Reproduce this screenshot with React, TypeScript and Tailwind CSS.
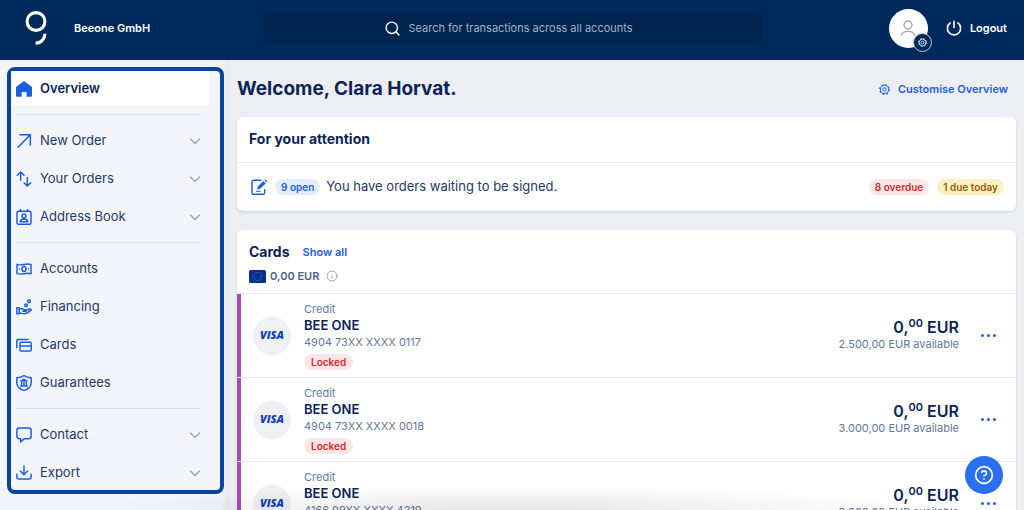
import * as React from "react";
import { CircleHelp, Info, Search } from "lucide-react";

type IconProps = { className?: string };

const strokeProps = {
  viewBox: "0 0 24 24",
  fill: "none",
  stroke: "currentColor",
  strokeWidth: 2.2,
  strokeLinecap: "round" as const,
  strokeLinejoin: "round" as const,
  "aria-hidden": true,
};

const LogoMark = ({ className }: IconProps) => (
  <svg viewBox="0 0 22 34" fill="none" stroke="currentColor" strokeWidth="3.1" className={className} role="img" aria-label="George">
    <circle cx="11" cy="10.5" r="8.9" />
    <path d="M19.9 22.8c0 5-3.9 9.3-9.3 9.3" />
  </svg>
);

const HomeIcon = ({ className }: IconProps) => (
  <svg viewBox="0 0 24 24" fill="currentColor" className={className} aria-hidden>
    <path d="M11 .8a1.8 1.8 0 0 1 2 0l10 7.4c.6.5 1 1.1 1 1.8v12a1.5 1.5 0 0 1-1.5 1.5H16v-6a1 1 0 0 0-1-1H9.5a1 1 0 0 0-1 1v6h-7A1.5 1.5 0 0 1 0 22V10c0-.7.4-1.3 1-1.8z" />
  </svg>
);

const ArrowIcon = ({ className }: IconProps) => (
  <svg {...strokeProps} className={className}>
    <path d="M3 21.5 21.5 2.5M6 2.5h15.5V18" />
  </svg>
);

const ChevronIcon = ({ className }: IconProps) => (
  <svg viewBox="0 0 12 12" fill="none" stroke="currentColor" strokeWidth="1.2" strokeLinecap="round" strokeLinejoin="round" className={className} aria-hidden>
    <path d="m1.5 4 4.5 4.5L10.5 4" />
  </svg>
);

const OrdersIcon = ({ className }: IconProps) => (
  <svg {...strokeProps} className={className}>
    <path d="M7 14V1.5M2 6.5l5-5 5 5M17 10v12.5M12 17.5l5 5 5-5" />
  </svg>
);

const AddressIcon = ({ className }: IconProps) => (
  <svg {...strokeProps} className={className}>
    <rect x="1.5" y="3.5" width="21" height="19.5" rx="2.5" />
    <path d="M6.5 1v2.5M17.5 1v2.5M6.5 19c.4-3 2.5-4 5.5-4s5.1 1 5.5 4z" />
    <circle cx="12" cy="10.5" r="3" />
  </svg>
);

const MoneyIcon = ({ className }: IconProps) => (
  <svg {...strokeProps} className={className}>
    <path d="M1.5 5c3.5 1.2 7 1 10.5.2s7-1 10.5 0v14c-3.5-1-7-1-10.5-.2s-7 1-10.5 0z" />
    <ellipse cx="12" cy="12" rx="3" ry="3.8" />
    <path d="M5.5 12h.1M18.4 12h.1" />
  </svg>
);

const FinancingIcon = ({ className }: IconProps) => (
  <svg {...strokeProps} className={className}>
    <path d="M1.2 13h3.6v9H1.2zM4.8 14.5h4c1.5 0 2.2 1.5 4 1.5h1.7c1.6 0 1.6 2.5 0 2.5H10M15.5 17l5-2c1.8-.6 3 1.2 1.5 2.3-3 2.4-6 4.9-9.5 4.9-3 0-4.7-1.2-7.7-1.2" />
    <circle cx="19.5" cy="3.5" r="2" />
    <circle cx="15" cy="9.5" r="2" />
  </svg>
);

const CardsIcon = ({ className }: IconProps) => (
  <svg {...strokeProps} className={className}>
    <rect x="6" y="8" width="16.8" height="13" rx="1.5" />
    <path d="M6 13.5h16.8M1.2 16V5c0-.8.5-1.3 1.3-1.3H18" />
  </svg>
);

const GuaranteeIcon = ({ className }: IconProps) => (
  <svg {...strokeProps} className={className}>
    <path d="M12 1c3 2 6.5 3 10.8 3v8c0 5-4.5 9-10.8 11.4C5.700 21 1.2 17 1.2 12V4C5.500 4 9 3 12 1z" />
    <path d="m12 5.800 5.500 3.400h-11z" fill="currentColor" strokeWidth="1" />
    <path d="M8.500 11v4M12 11v4M15.500 11v4M7 16.500h10" />
  </svg>
);

const ChatIcon = ({ className }: IconProps) => (
  <svg {...strokeProps} className={className}>
    <path d="M5 1.500h14a3.700 3.700 0 0 1 3.700 3.700v8.600a3.700 3.700 0 0 1-3.700 3.700h-6.500L7 22.500v-5H5a3.700 3.700 0 0 1-3.700-3.700V5.200A3.700 3.700 0 0 1 5 1.500z" />
  </svg>
);

const ExportIcon = ({ className }: IconProps) => (
  <svg {...strokeProps} className={className}>
    <path d="M12 1.500V14M6.500 9l5.500 5.500L17.500 9M1.300 14v4.500a2.500 2.500 0 0 0 2.500 2.500h16.400a2.500 2.500 0 0 0 2.500-2.500V14" />
  </svg>
);

const SignIcon = ({ className }: IconProps) => (
  <svg {...strokeProps} className={className}>
    <path d="M15 2H4a2.500 2.500 0 0 0-2.500 2.500v16A2.500 2.500 0 0 0 4 23h14a2.500 2.500 0 0 0 2.500-2.500V16" />
    <path d="M8 18.500h6" strokeWidth="1.500" />
    <path d="m10 15 1-4L18.500 3.500l3 3L14 14z" fill="currentColor" strokeWidth="1" />
    <path d="m21.500 2 1.500 1.500" />
  </svg>
);

// rim, dashed teeth, hub
const GearIcon = ({ className }: IconProps) => (
  <svg viewBox="0 0 24 24" fill="none" stroke="currentColor" strokeWidth="2" className={className} aria-hidden>
    <circle cx="12" cy="12" r="8.8" />
    <circle cx="12" cy="12" r="10.5" strokeWidth="2.5" strokeDasharray="4.12 4.12" />
    <circle cx="12" cy="12" r="3.8" />
  </svg>
);

const PersonIcon = ({ className }: IconProps) => (
  <svg viewBox="0 0 20 20" fill="none" stroke="currentColor" strokeWidth="1.3" strokeLinecap="round" className={className} aria-hidden>
    <circle cx="10" cy="7" r="4" />
    <path d="M3.2 17.2c1-2.6 3.5-3.9 6.8-3.9s5.8 1.3 6.8 3.9" />
  </svg>
);

const PowerIcon = ({ className }: IconProps) => (
  <svg viewBox="0 0 16 16" fill="none" stroke="currentColor" strokeWidth="1.6" strokeLinecap="round" className={className} aria-hidden>
    <path d="M8 1.2v6.3M4.2 2.9a6.6 6.6 0 1 0 7.6 0" />
  </svg>
);

const EuFlag = ({ className }: IconProps) => (
  <svg viewBox="0 0 17 13" className={className} role="img" aria-label="EU">
    <rect width="17" height="13" rx="1.5" fill="#0a2f94" />
    <circle cx="8.5" cy="6.5" r="4" fill="none" stroke="#8d8a66" strokeWidth=".9" strokeDasharray=".9 1.19" />
  </svg>
);

interface NavItem {
  label: string;
  icon: React.ComponentType<IconProps>;
  expandable?: boolean;
}

const navGroups: NavItem[][] = [
  [
    { label: "New Order", icon: ArrowIcon, expandable: true },
    { label: "Your Orders", icon: OrdersIcon, expandable: true },
    { label: "Address Book", icon: AddressIcon, expandable: true },
  ],
  [
    { label: "Accounts", icon: MoneyIcon },
    { label: "Financing", icon: FinancingIcon },
    { label: "Cards", icon: CardsIcon },
    { label: "Guarantees", icon: GuaranteeIcon },
  ],
  [
    { label: "Contact", icon: ChatIcon, expandable: true },
    { label: "Export", icon: ExportIcon, expandable: true },
  ],
];

const cards = [
  { number: "4904 73XX XXXX 0117", available: "2.500,00 EUR available" },
  { number: "4904 73XX XXXX 0018", available: "3.000,00 EUR available" },
  { number: "4166 99XX XXXX 4219", available: "3.000,00 EUR available" },
];

const Header = () => (
  <header className="flex h-[60px] shrink-0 items-center bg-[#002a5c] px-[17px] pb-1 text-white">
    <div className="flex flex-1 items-center gap-[27px]">
      <LogoMark className="ml-2 h-[34px] w-[22px]" />
      <span className="text-[11px] font-semibold whitespace-nowrap">Beeone GmbH</span>
    </div>
    <label className="flex h-8 w-[497px] items-center justify-center gap-2 rounded bg-[#00234f]">
      <Search className="size-[17px]" aria-hidden />
      <input
        type="text"
        aria-label="Search"
        placeholder="Search for transactions across all accounts"
        className="w-[232px] bg-transparent text-[11px] outline-none placeholder:text-[#9fb3cc]"
      />
    </label>
    <div className="flex flex-1 items-center justify-end gap-[18px]">
      <button type="button" aria-label="Profile settings" className="relative flex size-[39px] items-center justify-center rounded-full bg-white">
        <PersonIcon className="size-5 text-[#9ca8bd]" />
        <span className="absolute -right-1 -bottom-1 flex size-[19px] items-center justify-center rounded-full border border-[#b8c6da] bg-[#002a5c]">
          <GearIcon className="size-[9px]" />
        </span>
      </button>
      <button type="button" className="flex items-center gap-2 text-[11px] font-semibold">
        <PowerIcon className="size-4" />
        Logout
      </button>
    </div>
  </header>
);

const Sidebar = () => (
  <aside className="w-[229px] shrink-0 bg-linear-to-r from-[#f3f5fa] from-97% to-[#e6e8ed] pt-[7px] pr-[5px] pl-[7px]">
    <nav aria-label="Main" className="rounded-lg border-4 border-[#0545a4]">
      <a href="#overview" aria-current="page" className="mr-[10px] flex h-[34px] items-center gap-2 rounded-r bg-white pt-0.5 pl-[5px] text-[13px] font-semibold text-[#0c2457]">
        <HomeIcon className="size-4 text-[#1a5ce0]" />
        Overview
      </a>
      <div className="-mb-0.5 pt-[3px]">
        {navGroups.map((group, i) => (
          <ul key={i} className="mr-[19px] ml-[5px]">
            <li role="separator" className="mt-[6px] mb-[7px] h-px bg-[#e1e4ea]" />
            {group.map(({ label, icon: Icon, expandable }) => (
              <li key={label}>
                <a href="#" className="flex h-[38px] items-center gap-2 text-[13px] text-[#1f3868]">
                  <Icon className="size-4 text-[#1a5ce0]" />
                  <span className="flex-1">{label}</span>
                  {expandable && <ChevronIcon className="size-3 text-[#9aa5b5]" />}
                </a>
              </li>
            ))}
          </ul>
        ))}
      </div>
    </nav>
  </aside>
);

const Attention = () => (
  <section className="rounded-md bg-white shadow-sm">
    <h2 className="flex h-[46px] items-center border-b border-[#e8eaef] px-3 pb-0.5 text-sm font-bold text-[#0c2457]">For your attention</h2>
    <div className="flex h-12 items-center px-3">
      <SignIcon className="mr-2 ml-0.5 size-4 text-[#1a5ce0]" />
      <span className="mr-[6px] rounded-full bg-[#e4edfd] px-[6px] text-[10px] leading-4 font-semibold text-[#1a5ce0]">9 open</span>
      <p className="flex-1 text-[13px] text-[#1f3868]">You have orders waiting to be signed.</p>
      <span className="mr-2 rounded-full bg-[#fde6e6] px-[6px] text-[10px] leading-4 font-semibold text-[#c62a2f]">8 overdue</span>
      <span className="rounded-full bg-[#fff0c2] px-[6px] text-[10px] leading-4 font-semibold text-[#9a5a0c]">1 due today</span>
    </div>
  </section>
);

const CardRow = ({ number, available }: { number: string; available: string }) => (
  <li className="flex h-[84px] items-center border-t border-[#e8eaef]">
    <div className="h-full w-1 bg-[#a64db0]" />
    <div className="mr-[13px] ml-3 flex size-[38px] items-center justify-center rounded-full bg-[#eef0f4] font-['Open_Sans',sans-serif] text-[11px] font-extrabold text-[#1240b8] italic">
      VISA
    </div>
    <div className="flex-1 text-[11px] text-[#64779a]">
      <p className="leading-4">Credit</p>
      <p className="text-[13px] leading-[17px] font-semibold text-[#0c2457]">BEE ONE</p>
      <p className="leading-[17px]">{number}</p>
      <span className="mt-[3px] block w-fit rounded-full bg-[#fde6e6] px-[7px] text-[10px] leading-4 font-semibold text-[#d12a2a]">Locked</span>
    </div>
    <div className="pb-0.5 text-right">
      <p className="text-base leading-[18px] font-semibold text-[#0c2457]">
        0,<sup className="text-[11px]">00</sup> EUR
      </p>
      <p className="text-[11px] leading-4 text-[#64779a]">{available}</p>
    </div>
    <button type="button" aria-label="More actions" className="mr-5 ml-[22px] flex h-4 items-center gap-[3px]">
      <span className="size-[3px] rounded-full bg-[#1a5ce0]" />
      <span className="size-[3px] rounded-full bg-[#1a5ce0]" />
      <span className="size-[3px] rounded-full bg-[#1a5ce0]" />
    </button>
  </li>
);

const CardsSection = () => (
  <section className="mt-[19px] rounded-md bg-white shadow-sm">
    <div className="h-[63px] px-3 pt-3">
      <div className="flex h-5 items-center gap-[13px]">
        <h2 className="text-sm font-bold text-[#0c2457]">Cards</h2>
        <a href="#cards" className="text-[11px] font-semibold text-[#1a5ce0]">Show all</a>
      </div>
      <p className="mt-[6px] flex items-center gap-1 text-[11px] leading-4 font-semibold text-[#4c6288]">
        <EuFlag className="h-[13px] w-[17px]" />
        0,00 EUR
        <Info className="ml-[3px] size-3 text-[#9aa5b5]" />
      </p>
    </div>
    <ul>
      {cards.map((card) => (
        <CardRow key={card.number} {...card} />
      ))}
    </ul>
  </section>
);

export default function App() {
  return (
    <div className="relative flex h-screen flex-col overflow-hidden bg-[#edeef2] font-['Inter','Liberation_Sans',sans-serif]">
      <Header />
      <div className="flex min-h-0 flex-1">
        <Sidebar />
        <main className="min-w-0 flex-1 px-2">
          <div className="flex h-[57px] items-center justify-between pt-0.5 pr-2">
            <h1 className="text-[19px] font-bold text-[#0c2457]">Welcome, Clara Horvat.</h1>
            <button type="button" className="flex items-center gap-2 text-[11px] font-semibold text-[#1a5ce0]">
              <GearIcon className="size-[11px]" />
              Customise Overview
            </button>
          </div>
          <Attention />
          <CardsSection />
        </main>
      </div>
      {/* soft shade along the bottom edge */}
      <div className="pointer-events-none absolute inset-x-24 bottom-0 h-6 bg-[radial-gradient(ellipse_50%_100%_at_50%_100%,rgba(0,0,0,0.1),transparent)]" />
      <button type="button" aria-label="Help" className="absolute right-[21px] bottom-4 flex size-[38px] items-center justify-center rounded-full bg-[#2a6ff0] text-white">
        <CircleHelp className="size-5" />
      </button>
    </div>
  );
}
